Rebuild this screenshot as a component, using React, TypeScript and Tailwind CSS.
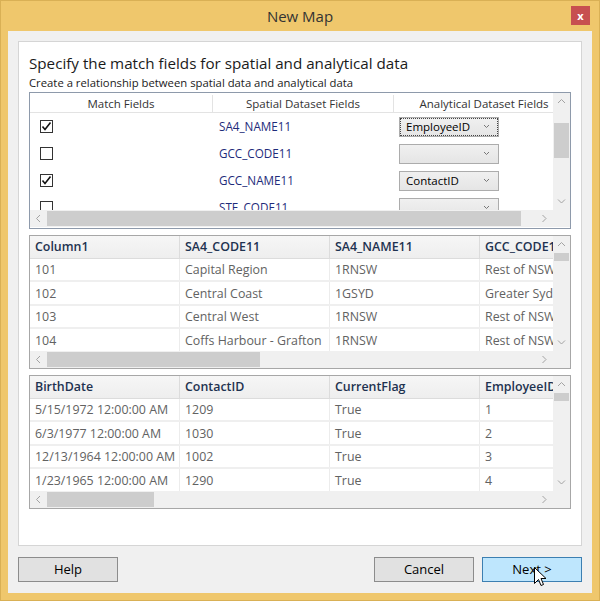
import React from "react";

const Chevron = ({ dir }: { dir: "up" | "down" | "left" | "right" }) => {
  const d = {
    up: "M1 5 L4.5 1.5 L8 5",
    down: "M1 1.5 L4.5 5 L8 1.5",
    left: "M5 1 L1.5 4.5 L5 8",
    right: "M1.5 1 L5 4.5 L1.5 8",
  }[dir];
  const vertical = dir === "up" || dir === "down";
  return (
    <svg
      width={vertical ? 9 : 7}
      height={vertical ? 7 : 9}
      viewBox={vertical ? "0 0 9 7" : "0 0 7 9"}
      fill="none"
      stroke="#a3a3a3"
      strokeWidth="1"
    >
      <path d={d} />
    </svg>
  );
};

const VScroll = ({ gap, thumb }: { gap: number; thumb: number }) => (
  <div className="w-[17px] h-full bg-[#f0f0f0] flex flex-col shrink-0">
    <div className="h-[17px] flex items-center justify-center shrink-0">
      <Chevron dir="up" />
    </div>
    <div className="shrink-0" style={{ height: gap }} />
    <div className="bg-[#cdcdcd] mx-[1px] shrink-0" style={{ height: thumb }} />
    <div className="flex-1" />
    <div className="h-[17px] flex items-center justify-center shrink-0">
      <Chevron dir="down" />
    </div>
  </div>
);

const HScroll = ({ thumb }: { thumb: number }) => (
  <div className="h-[17px] flex shrink-0">
    <div className="flex-1 bg-[#f0f0f0] flex">
      <div className="w-[17px] flex items-center justify-center shrink-0">
        <Chevron dir="left" />
      </div>
      <div className="bg-[#cdcdcd] my-[1px] shrink-0" style={{ width: thumb }} />
      <div className="flex-1" />
      <div className="w-[17px] flex items-center justify-center shrink-0">
        <Chevron dir="right" />
      </div>
    </div>
    <div className="w-[17px] bg-[#f0f0f0] shrink-0" />
  </div>
);

const CheckBox = ({ checked }: { checked: boolean }) => (
  <div className="w-[13px] h-[13px] border border-[#333] bg-white flex items-center justify-center">
    {checked && (
      <svg width="11" height="11" viewBox="0 0 11 11" fill="none">
        <path d="M1.5 5.5 L4 8.5 L9.5 1.5" stroke="#111" strokeWidth="1.6" />
      </svg>
    )}
  </div>
);

const Combo = ({ value, focus }: { value?: string; focus?: boolean }) => (
  <div className="w-[100px] h-[20px] border border-[#acacac] bg-gradient-to-b from-[#f0f0f0] to-[#e5e5e5] p-[1px]">
    <div
      className={`h-full flex items-center justify-between pl-[5px] pr-[7px] ${
        focus ? "outline outline-1 outline-dotted outline-[#444]" : ""
      }`}
    >
      <span className="text-[11.5px] text-black leading-none">{value ?? ""}</span>
      <svg width="7" height="5" viewBox="0 0 7 5" fill="none" stroke="#777">
        <path d="M1 1 L3.5 3.5 L6 1" />
      </svg>
    </div>
  </div>
);

const matchRows = [
  { checked: true, field: "SA4_NAME11", value: "EmployeeID", focus: true },
  { checked: false, field: "GCC_CODE11", value: "" },
  { checked: true, field: "GCC_NAME11", value: "ContactID" },
  { checked: false, field: "STE_CODE11", value: "" },
];

const MatchGrid = () => (
  <div className="border border-[#8e9aab] h-[137px] flex flex-col bg-white">
    <div className="flex h-[117px]">
      <div className="flex-1 overflow-hidden">
        <div className="flex h-[20px] border-b border-[#e3e3e3] text-[11.5px] text-[#333] pt-[2px]">
          <div className="w-[183px] shrink-0 border-r border-[#e3e3e3] flex items-center justify-center">
            Match Fields
          </div>
          <div className="w-[181px] shrink-0 border-r border-[#e3e3e3] flex items-center justify-center">
            Spatial Dataset Fields
          </div>
          <div className="w-[180px] shrink-0 flex items-center justify-center">
            Analytical Dataset Fields
          </div>
        </div>
        {matchRows.map((r) => (
          <div key={r.field} className="flex h-[27px] items-center">
            <div className="w-[183px] shrink-0 pl-[10px]">
              <CheckBox checked={r.checked} />
            </div>
            <div className="w-[181px] shrink-0 pl-[6px] text-[11.7px] text-[#1e2b7a]">
              {r.field}
            </div>
            <div className="w-[180px] shrink-0 pl-[5px]">
              <Combo value={r.value} focus={r.focus} />
            </div>
          </div>
        ))}
      </div>
      <VScroll gap={13} thumb={35} />
    </div>
    <HScroll thumb={474} />
  </div>
);

const DataGrid = ({
  headers,
  rows,
  thumb,
}: {
  headers: string[];
  rows: string[][];
  thumb: number;
}) => (
  <div className="border border-[#a7a7a7] h-[134px] flex flex-col bg-white">
    <div className="flex h-[115px]">
      <div className="flex-1 overflow-hidden">
        <div className="flex h-[23px] bg-gradient-to-b from-[#f6f6f6] to-[#eeeeee] border-b border-[#dcdcdc]">
          {headers.map((h, i) => (
            <div
              key={i}
              className="w-[150px] shrink-0 border-r border-[#dcdcdc] flex items-center pl-[5px] pt-[1px] text-[12.4px] font-semibold text-[#1e3250] whitespace-nowrap overflow-hidden"
            >
              {h}
            </div>
          ))}
        </div>
        {rows.map((row, ri) => (
          <div key={ri} className="flex h-[23.4px] border-b-2 border-[#efefef]">
            {row.map((c, ci) => (
              <div
                key={ci}
                className="w-[150px] shrink-0 border-r border-[#ececec] flex items-center pl-[5px] pt-[2px] text-[12.4px] text-[#626262] whitespace-nowrap overflow-hidden"
              >
                {c}
              </div>
            ))}
          </div>
        ))}
      </div>
      <VScroll gap={0} thumb={8} />
    </div>
    <HScroll thumb={thumb} />
  </div>
);

const Cursor = () => (
  <svg
    className="absolute left-[533px] top-[566px]"
    width="13"
    height="21"
    viewBox="0 0 13 21"
  >
    <path
      d="M0.5 0.5 L0.5 16.5 L4.5 12.5 L7 18.5 L9.5 17.5 L7 11.5 L12 11.5 Z"
      fill="#fff"
      stroke="#000"
      strokeWidth="1"
    />
  </svg>
);

export default function App() {
  return (
    <div className="relative w-[600px] h-[601px] bg-[#efc76c] border border-[#d9b055] flex flex-col px-[7px] pb-[7px] font-['Open_Sans','Noto_Sans',sans-serif]">
      <div className="relative h-[30px] shrink-0 flex items-center justify-center">
        <span className="text-[15px] text-[#333]">New Map</span>
        <div className="absolute right-[2px] top-[5px] w-[19px] h-[19px] bg-[#c75050] flex items-center justify-center">
          <span className="text-white text-[11px] font-bold leading-none">x</span>
        </div>
      </div>
      <div className="flex-1 bg-[#f0f0f0] flex flex-col px-[10px] pt-[10px]">
        <div className="h-[505px] border border-[#d5d5d5] bg-white px-[10px] pt-[11px] flex flex-col">
          <div className="text-[15.2px] leading-[20px] text-[#1a1a1a]">
            Specify the match fields for spatial and analytical data
          </div>
          <div className="text-[11.3px] leading-[17px] text-[#1a1a1a] mt-[1px] mb-[1px]">
            Create a relationship between spatial data and analytical data
          </div>
          <MatchGrid />
          <div className="mt-[6px]">
            <DataGrid
              headers={["Column1", "SA4_CODE11", "SA4_NAME11", "GCC_CODE11"]}
              rows={[
                ["101", "Capital Region", "1RNSW", "Rest of NSW"],
                ["102", "Central Coast", "1GSYD", "Greater Sydney"],
                ["103", "Central West", "1RNSW", "Rest of NSW"],
                ["104", "Coffs Harbour - Grafton", "1RNSW", "Rest of NSW"],
              ]}
              thumb={213}
            />
          </div>
          <div className="mt-[6px]">
            <DataGrid
              headers={["BirthDate", "ContactID", "CurrentFlag", "EmployeeID"]}
              rows={[
                ["5/15/1972 12:00:00 AM", "1209", "True", "1"],
                ["6/3/1977 12:00:00 AM", "1030", "True", "2"],
                ["12/13/1964 12:00:00 AM", "1002", "True", "3"],
                ["1/23/1965 12:00:00 AM", "1290", "True", "4"],
              ]}
              thumb={107}
            />
          </div>
        </div>
        <div className="flex justify-between mt-[11px] h-[25px]">
          <button className="w-[100px] h-[25px] bg-[#e1e1e1] border border-[#8c8c8c] text-[13px] text-black">
            Help
          </button>
          <div className="flex gap-[8px]">
            <button className="w-[100px] h-[25px] bg-[#e1e1e1] border border-[#8c8c8c] text-[13px] text-black">
              Cancel
            </button>
            <button className="w-[100px] h-[25px] bg-[#bee6fd] border border-[#3c7fb1] text-[13px] text-black">
              Next &gt;
            </button>
          </div>
        </div>
      </div>
      <Cursor />
    </div>
  );
}
